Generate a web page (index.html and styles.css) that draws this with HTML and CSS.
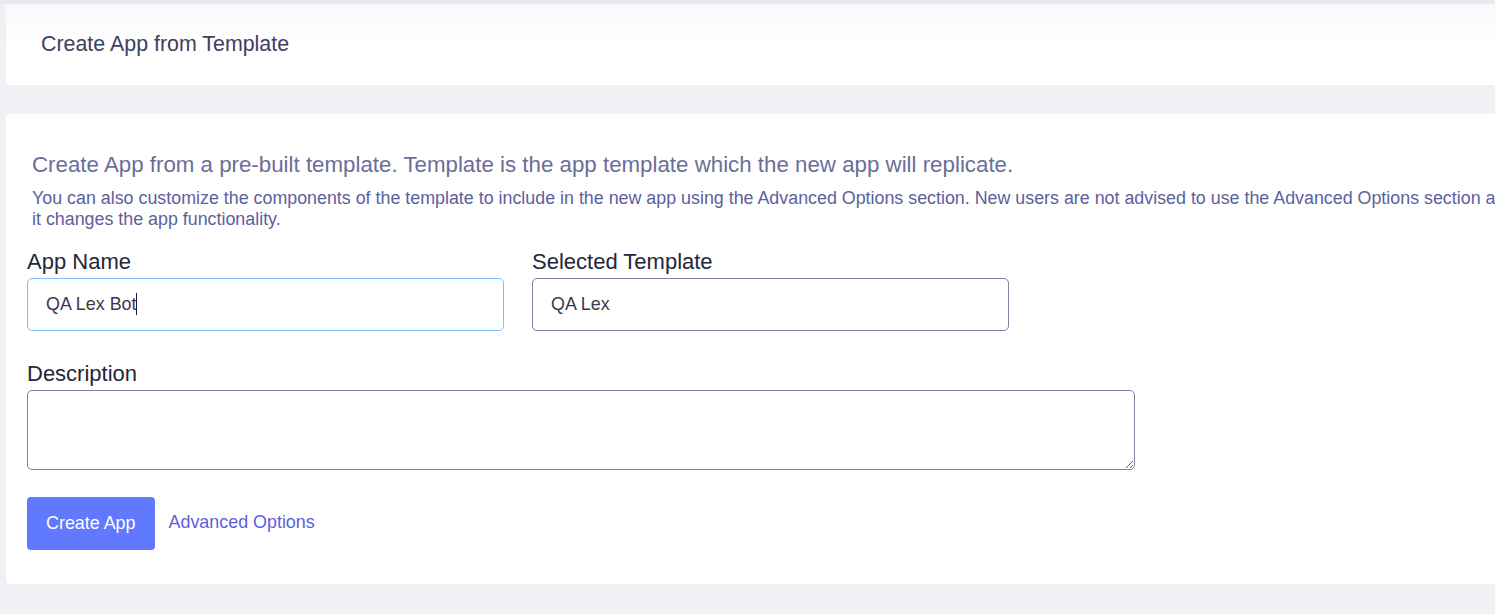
FILE: index.html
```html
<!DOCTYPE html>
<html lang="en">
<head>
<meta charset="utf-8">
<title>Create App from Template</title>
<link rel="stylesheet" href="styles.css">
</head>
<body>
<div class="page">
  <header class="card header-card">
    <h1 class="page-title">Create App from Template</h1>
  </header>
  <main class="card form-card">
    <div class="intro">
      <p class="intro-lead">Create App from a pre-built template. Template is the app template which the new app will replicate.</p>
      <p class="intro-note">You can also customize the components of the template to include in the new app using the Advanced Options section. New users are not advised to use the Advanced Options section as it changes the app functionality.</p>
    </div>
    <form class="form">
      <div class="form-row">
        <div class="field">
          <label class="field-label" for="appName">App Name</label>
          <div class="input-wrap">
            <input class="field-input is-focused" id="appName" type="text" value="QA Lex Bot">
            <span class="caret"></span>
          </div>
        </div>
        <div class="field">
          <label class="field-label" for="template">Selected Template</label>
          <input class="field-input" id="template" type="text" value="QA Lex">
        </div>
      </div>
      <div class="field field-wide">
        <label class="field-label" for="desc">Description</label>
        <textarea class="field-textarea" id="desc"></textarea>
      </div>
      <div class="actions">
        <button class="btn-primary" type="button">Create App</button>
        <a class="link" href="#">Advanced Options</a>
      </div>
    </form>
  </main>
</div>
</body>
</html>
```

FILE: styles.css
```css
html, body {
  margin: 0;
  padding: 0;
  overflow: hidden;
}
body {
  background: #f0f0f5;
  font-family: "Liberation Sans", Arial, sans-serif;
  width: 1495px;
  height: 614px;
}
.page {
  padding: 4px 0 0 6px;
  background: linear-gradient(#e8e8ee 0, #e8e8ee 4px, #f0f0f5 4px);
  height: 610px;
}
.card {
  background: #ffffff;
  border-radius: 4px;
  width: 1560px;
  box-sizing: border-box;
}
.header-card {
  height: 81px;
  display: flex;
  align-items: center;
  padding-left: 35px;
  background: linear-gradient(#f9f9fb 0, #ffffff 45px);
}
.page-title {
  margin: 0;
  font-size: 21.4px;
  line-height: 25px;
  font-weight: 400;
  color: #3e4060;
}
.form-card {
  margin-top: 29px;
  height: 470px;
  padding: 38px 0 0 21px;
}
.intro {
  padding-left: 5px;
  width: 1478px;
}
.intro-lead {
  margin: 0 0 10px;
  font-size: 22.3px;
  line-height: 26.4px;
  color: #6b6e98;
}
.intro-note {
  margin: 0;
  font-size: 17.85px;
  line-height: 21px;
  color: #5c619c;
}
.form {
  margin-top: 19px;
}
.form-row {
  display: flex;
  gap: 28px;
}
.field {
  display: flex;
  flex-direction: column;
}
.field-wide {
  margin-top: 30px;
}
.field-label {
  font-size: 22px;
  line-height: 26.4px;
  color: #24263a;
  margin-bottom: 2.4px;
}
.input-wrap {
  position: relative;
}
.field-input {
  display: block;
  width: 477px;
  height: 53px;
  box-sizing: border-box;
  border: 1px solid #7f81a6;
  border-radius: 5px;
  padding: 0 18px;
  font-family: "Liberation Sans", Arial, sans-serif;
  font-size: 17.9px;
  color: #3a3a4a;
  background: #fff;
  outline: none;
}
.field-input.is-focused {
  border-color: #80bdff;
}
.caret {
  position: absolute;
  left: 109px;
  top: 15px;
  width: 1px;
  height: 22px;
  background: #1e1e2a;
}
.field-textarea {
  display: block;
  width: 1108px;
  height: 80px;
  box-sizing: border-box;
  border: 1px solid #7f81a6;
  border-radius: 5px;
  padding: 10px 18px;
  font-family: "Liberation Sans", Arial, sans-serif;
  font-size: 17.3px;
  resize: vertical;
  outline: none;
  background: #fff;
}
.actions {
  margin-top: 27px;
  display: flex;
  align-items: center;
  gap: 14px;
}
.btn-primary {
  height: 53px;
  padding: 0 19px;
  border: none;
  border-radius: 4px;
  background: #6079ff;
  color: #ffffff;
  font-family: "Liberation Sans", Arial, sans-serif;
  font-size: 17.9px;
  cursor: pointer;
}
.link {
  font-size: 17.9px;
  color: #5c5fe3;
  text-decoration: none;
  padding-bottom: 2px;
}
```
